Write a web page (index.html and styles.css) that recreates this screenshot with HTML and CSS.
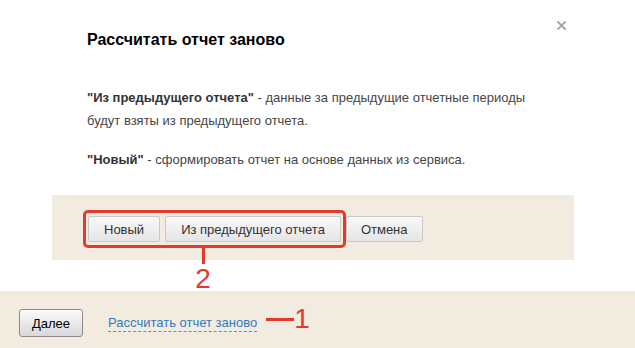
FILE: index.html
```html
<!DOCTYPE html>
<html lang="ru">
<head>
<meta charset="utf-8">
<title>Рассчитать отчет заново</title>
<link rel="stylesheet" href="styles.css">
</head>
<body>
<div class="page">
  <section class="dialog">
    <header class="dlg-head">
      <h1 class="dlg-title">Рассчитать отчет заново</h1>
      <button class="dlg-close" aria-label="Закрыть">
        <svg width="9" height="9" viewBox="0 0 9 9"><path d="M1 1L8 8M8 1L1 8" stroke="#a3a3a3" stroke-width="1.8" stroke-linecap="square"/></svg>
      </button>
    </header>
    <div class="dlg-body">
      <p class="dlg-text"><b>"Из предыдущего отчета"</b> - данные за предыдущие отчетные периоды будут взяты из предыдущего отчета.</p>
      <p class="dlg-text dlg-text-2"><b>"Новый"</b> - сформировать отчет на основе данных из сервиса.</p>
    </div>
    <footer class="dlg-foot">
      <div class="highlight">
        <button class="btn">Новый</button>
        <button class="btn">Из предыдущего отчета</button>
        <span class="callout">
          <span class="callout-line"></span>
          <span class="callout-num">2</span>
        </span>
      </div>
      <button class="btn btn-cancel">Отмена</button>
    </footer>
  </section>
  <div class="bottom-bar">
    <button class="btn-next">Далее</button>
    <a class="recalc-link" href="#">Рассчитать отчет заново</a>
    <span class="mark">
      <span class="mark-line"></span>
      <span class="mark-num">1</span>
    </span>
  </div>
</div>
</body>
</html>
```

FILE: styles.css
```css
* { box-sizing: border-box; }
html, body { margin: 0; padding: 0; background: #ffffff; }
body { font-family: "Liberation Sans", Arial, sans-serif; color: #444; }

.page { width: 635px; height: 348px; overflow: hidden; }

.dialog {
  margin-left: 52px;
  width: 522px;
  background: #fff;
}

.dlg-head {
  display: flex;
  justify-content: space-between;
  align-items: flex-start;
  padding: 21px 8px 0 35px;
}
.dlg-title {
  margin: 9px 0 0;
  font-size: 16px;
  line-height: 20px;
  font-weight: bold;
  color: #000;
}
.dlg-close {
  display: block;
  width: 9px;
  height: 9px;
  padding: 0;
  border: 0;
  background: none;
  line-height: 0;
}

.dlg-body { padding: 36px 35px 24px; }
.dlg-text {
  margin: 0;
  max-width: 455px;
  font-size: 13px;
  line-height: 23px;
  color: #454545;
}
.dlg-text b { color: #333; }
.dlg-text-2 { margin-top: 16px; }

.dlg-foot {
  display: flex;
  align-items: center;
  background: #f2ebe0;
  padding: 15px 0 12px 31px;
}

.highlight {
  position: relative;
  display: flex;
  gap: 5px;
  padding: 3px 2px;
  border: 3px solid #e3392f;
  border-radius: 5px;
}

.btn {
  height: 26px;
  padding: 0 15px;
  font-family: "Liberation Sans", Arial, sans-serif;
  font-size: 13px;
  color: #333;
  border: 1px solid #c9c9c9;
  border-radius: 2px;
  background: linear-gradient(#f8f8f8, #e5e5e5);
}
.btn-cancel { padding: 0 14px; }

.callout {
  position: absolute;
  left: 109px;
  top: calc(100% + 3px);
  width: 16px;
  display: flex;
  flex-direction: column;
  align-items: center;
}
.callout-line { width: 3px; height: 16px; background: #e3392f; }
.callout-num {
  font-size: 28px;
  line-height: 28px;
  color: #e3392f;
  margin-top: 1px;
}

.bottom-bar {
  margin-top: 31px;
  height: 57px;
  background: #f2ebe0;
  display: flex;
  padding: 18px 0 0 19px;
  align-items: flex-start;
}

.btn-next {
  height: 28px;
  padding: 0 12px;
  font-family: "Liberation Sans", Arial, sans-serif;
  font-size: 13px;
  color: #000;
  border: 1px solid #8c8c8c;
  border-radius: 3px;
  background: linear-gradient(#fbfbfb, #d8d8d8);
}

.recalc-link {
  margin-left: 25px;
  margin-top: 6px;
  font-size: 13px;
  line-height: 16px;
  color: #2f7cc2;
  text-decoration: none;
  border-bottom: 1px dashed #4f97d3;
}

.mark {
  display: flex;
  align-items: center;
  margin-left: 9px;
  margin-top: -4px;
}
.mark-line { width: 28px; height: 3px; background: #e3392f; }
.mark-num {
  font-size: 28px;
  line-height: 28px;
  color: #e3392f;
}
```
